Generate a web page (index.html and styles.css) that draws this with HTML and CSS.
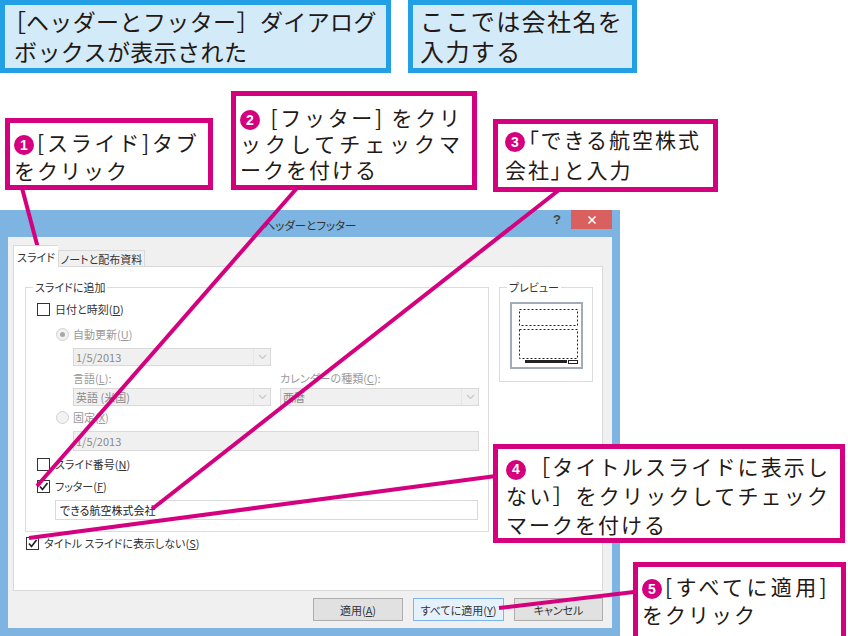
FILE: index.html
```html
<!DOCTYPE html>
<html lang="ja">
<head>
<meta charset="utf-8">
<title>ヘッダーとフッター</title>
<link rel="stylesheet" href="styles.css">
</head>
<body>
<div class="page">
  <div class="notes">
    <div class="note note-a"><span class="half">［</span>ヘッダーとフッター］ダイアログ<br>ボックスが表示された</div>
    <div class="note note-b">ここでは会社名を<br>入力する</div>
  </div>

  <div class="dialog">
    <div class="titlebar">
      <span class="title">ヘッダーとフッター</span>
      <div class="controls">
        <span class="help">?</span>
        <span class="close"><svg width="10" height="10" viewBox="0 0 10 10"><path d="M1.5 1.5L8.5 8.5M8.5 1.5L1.5 8.5" stroke="#fff" stroke-width="1.6"/></svg></span>
      </div>
    </div>
    <div class="client">
      <div class="tabs">
        <span class="tab active">スライド</span>
        <span class="tab">ノートと配布資料</span>
      </div>
      <div class="panel">
        <div class="groups">
          <div class="group main">
            <span class="legend">スライドに追加</span>
            <div class="row"><span class="cb"></span><span class="lbl">日付と時刻(<u>D</u>)</span></div>
            <div class="sub">
              <div class="row r-auto"><span class="rb on"></span><span class="lbl dis">自動更新(<u>U</u>)</span></div>
              <div class="indent">
                <div class="select s-date"><span class="val">1/5/2013</span><span class="arrow"><svg width="9" height="6" viewBox="0 0 9 6"><path d="M1 1L4.5 4.5L8 1" fill="none" stroke="#c8c8c8" stroke-width="1.2"/></svg></span></div>
                <div class="pair-labels"><span class="pl-a">言語(<u>L</u>):</span><span>カレンダーの種類(<u>C</u>):</span></div>
                <div class="pair">
                  <div class="select s-lang"><span class="val">英語 (米国)</span><span class="arrow"><svg width="9" height="6" viewBox="0 0 9 6"><path d="M1 1L4.5 4.5L8 1" fill="none" stroke="#c8c8c8" stroke-width="1.2"/></svg></span></div>
                  <div class="select s-cal"><span class="val">西暦</span><span class="arrow"><svg width="9" height="6" viewBox="0 0 9 6"><path d="M1 1L4.5 4.5L8 1" fill="none" stroke="#c8c8c8" stroke-width="1.2"/></svg></span></div>
                </div>
              </div>
              <div class="row r-fixed"><span class="rb"></span><span class="lbl dis">固定(<u>X</u>)</span></div>
              <div class="indent"><div class="textbox fixed">1/5/2013</div></div>
            </div>
            <div class="row r-num"><span class="cb"></span><span class="lbl">スライド番号(<u>N</u>)</span></div>
            <div class="row r-foot"><span class="cb"><svg width="11" height="11" viewBox="0 0 11 11"><path d="M2 5.5L4.5 8.5L9.5 2" fill="none" stroke="#222" stroke-width="1.7"/></svg></span><span class="lbl">フッター(<u>F</u>)</span></div>
            <div class="textbox footer">できる航空株式会社</div>
          </div>
          <div class="group preview">
            <span class="legend">プレビュー</span>
            <div class="thumb">
              <svg width="69" height="63" viewBox="0 0 69 63">
                <rect x="7.5" y="5.5" width="58" height="16" fill="none" stroke="#222" stroke-width="1" stroke-dasharray="2 2"/>
                <rect x="7.5" y="25.5" width="58" height="29" fill="none" stroke="#222" stroke-width="1" stroke-dasharray="2 2"/>
                <rect x="13" y="56" width="42" height="3" fill="#222"/>
                <rect x="56.5" y="56.5" width="9" height="3" fill="none" stroke="#222" stroke-width="1"/>
              </svg>
            </div>
          </div>
        </div>
        <div class="row r-title"><span class="cb"><svg width="11" height="11" viewBox="0 0 11 11"><path d="M2 5.5L4.5 8.5L9.5 2" fill="none" stroke="#222" stroke-width="1.7"/></svg></span><span class="lbl">タイトル スライドに表示しない(<u>S</u>)</span></div>
      </div>
      <div class="buttons">
        <span class="btn b-apply">適用(<u>A</u>)</span>
        <span class="btn b-all">すべてに適用(<u>Y</u>)</span>
        <span class="btn b-cancel">キャンセル</span>
      </div>
    </div>
  </div>

  <svg class="leaders" width="848" height="636" viewBox="0 0 848 636">
    <g stroke="#d4007e" stroke-width="4" stroke-linecap="butt" fill="none">
      <line x1="22" y1="188" x2="39" y2="252"/>
      <line x1="297" y1="188" x2="37" y2="486"/>
      <line x1="559" y1="190" x2="152" y2="509"/>
      <line x1="496" y1="476" x2="29" y2="538"/>
      <line x1="634" y1="592" x2="499" y2="608"/>
    </g>
  </svg>

  <div class="callout c1">
    <span class="ln wide"><span class="num">1</span>[スライド]タブ</span>
    <span class="ln">をクリック</span>
  </div>
  <div class="callout c2">
    <span class="ln fill"><span class="num">2</span> [フッター] をクリ</span>
    <span class="ln fill">ックしてチェックマ</span>
    <span class="ln">ークを付ける</span>
  </div>
  <div class="callout c3">
    <span class="ln"><span class="num">3</span><span class="half">「</span>できる航空株式</span>
    <span class="ln">会社<span class="half">」</span>と入力</span>
  </div>
  <div class="callout c4">
    <span class="ln fill"><span class="num">4</span>［タイトルスライドに表示し</span>
    <span class="ln fill">ない］をクリックしてチェック</span>
    <span class="ln">マークを付ける</span>
  </div>
  <div class="callout c5">
    <span class="ln wider"><span class="num">5</span>[すべてに適用]</span>
    <span class="ln">をクリック</span>
  </div>
</div>
</body>
</html>
```

FILE: styles.css
```css
* { box-sizing: border-box; margin: 0; padding: 0; }
html, body { background: #fff; }
body { width: 848px; height: 636px; overflow: hidden; }

.page {
  position: relative;
  width: 848px;
  height: 636px;
  overflow: hidden;
  font-family: "Noto Sans CJK JP", "Noto Sans", sans-serif;
  color: #231815;
}

.half { font-feature-settings: "palt"; }

/* top notes */
.notes { display: flex; gap: 17px; }
.note {
  height: 73px;
  border: 5px solid #23a0e5;
  background: #d3eaf8;
  padding: 1px 0 0 9px;
  font-size: 23px;
  line-height: 30px;
  letter-spacing: 0.4px;
  white-space: nowrap;
}
.note-a { width: 391px; }
.note-b { width: 229px; padding-left: 7px; font-size: 24px; letter-spacing: 1.4px; }

/* dialog */
.dialog {
  margin-top: 137px;
  width: 620px;
  height: 426px;
  background: #7db4e1;
  display: flex;
  flex-direction: column;
  font-size: 11px;
  color: #333;
  font-feature-settings: "palt";
}
.titlebar {
  height: 27px;
  display: grid;
  grid-template-columns: 1fr auto 1fr;
}
.title { grid-column: 2; align-self: center; font-size: 11.5px; color: #333; padding-top: 2px; }
.controls {
  justify-self: end;
  display: flex;
  align-items: flex-start;
  padding-right: 8px;
}
.help {
  font-family: "Liberation Sans", sans-serif;
  font-weight: bold;
  font-size: 13px;
  color: #444;
  margin-top: 2px;
  margin-right: 10px;
}
.close {
  width: 41px;
  height: 19px;
  background: #d9605e;
  display: flex;
  align-items: center;
  justify-content: center;
}

.client {
  flex: 1;
  margin: 0 8px 8px;
  background: #f0f0f0;
  padding: 8px 9px 0 5px;
}
.tabs { display: flex; align-items: flex-end; height: 21px; }
.tab {
  height: 16px;
  width: 87px;
  border: 1px solid #d9d9d9;
  border-bottom: none;
  background: #f0f0f0;
  display: flex;
  align-items: center;
  justify-content: center;
  font-size: 11px;
  color: #333;
}
.tab.active {
  width: 45px;
  height: 22px;
  background: #fff;
  margin-bottom: -1px;
  position: relative;
  z-index: 1;
  border-right: none;
}
.panel {
  height: 325px;
  border: 1px solid #d9d9d9;
  background: #fff;
  padding: 20px 0 0 11px;
}
.groups { display: flex; align-items: flex-start; gap: 10px; }
.group {
  position: relative;
  border: 1px solid #dcdcdc;
}
.legend {
  position: absolute;
  top: -9px;
  left: 7px;
  background: #fff;
  padding: 0 2px;
  line-height: 16px;
  color: #333;
}
.group.main {
  width: 464px;
  height: 245px;
  padding: 11px 0 0 11px;
  display: flex;
  flex-direction: column;
}
.group.preview {
  width: 94px;
  height: 95px;
  padding: 14px 0 0 10px;
}
.thumb {
  width: 73px;
  height: 67px;
  border: 2px solid #a3acb6;
  background: #fff;
}
.thumb svg { display: block; }

.row { display: flex; align-items: center; height: 20px; }
.lbl { margin-left: 5px; line-height: 14px; }
.lbl.dis { color: #9a9a9a; margin-left: 4px; }
.cb {
  width: 13px;
  height: 13px;
  border: 1px solid #333;
  background: #fff;
  display: flex;
  align-items: center;
  justify-content: center;
  flex: none;
}
.rb {
  width: 13px;
  height: 13px;
  border-radius: 50%;
  border: 1px solid #d0d0d0;
  background: #f2f2f2;
  flex: none;
  display: flex;
  align-items: center;
  justify-content: center;
}
.rb.on::after {
  content: "";
  width: 5px;
  height: 5px;
  border-radius: 50%;
  background: #a8a8a8;
}
.sub { padding-left: 19px; display: flex; flex-direction: column; }
.r-auto { margin-top: 5px; }
.indent { padding-left: 17px; display: flex; flex-direction: column; }
.select {
  height: 18px;
  border: 1px solid #d9d9d9;
  background: #f0f0f0;
  display: flex;
  align-items: center;
  color: #8a8a8a;
}
.select .val { flex: 1; padding-left: 2px; }
.select .arrow {
  width: 17px;
  height: 100%;
  border-left: 1px solid #e4e4e4;
  display: flex;
  align-items: center;
  justify-content: center;
}
.s-date { width: 198px; margin-top: 4px; }
.pair-labels { display: flex; margin-top: 5px; height: 14px; line-height: 14px; color: #9a9a9a; }
.pl-a { width: 207px; }
.pair { display: flex; gap: 9px; margin-top: 3px; }
.s-lang { width: 198px; }
.s-cal { width: 199px; }
.r-fixed { height: 18px; margin-top: 2px; }
.textbox {
  height: 20px;
  border: 1px solid #d9d9d9;
  display: flex;
  align-items: center;
  padding-left: 2px;
}
.textbox.fixed { width: 406px; margin-top: 5px; background: #f0f0f0; color: #8a8a8a; }
.r-num { margin-top: 3px; }
.r-foot { margin-top: 2px; }
.textbox.footer { width: 423px; margin: 4px 0 0 18px; background: #fff; color: #222; padding-left: 4px; }
.r-title { margin: 2px 0 0 1px; height: 18px; }

.buttons { display: flex; justify-content: flex-end; gap: 10px; padding-top: 7px; }
.btn {
  height: 23px;
  border: 1px solid #adadad;
  background: #e1e1e1;
  display: flex;
  align-items: center;
  justify-content: center;
  color: #333;
}
.b-apply { width: 90px; }
.b-all { width: 91px; border-color: #7eb4ea; background: #e5f1fb; }
.b-cancel { width: 89px; }

/* annotation leaders */
.leaders { position: absolute; left: 0; top: 0; pointer-events: none; }

/* callouts */
.callout {
  position: absolute;
  border: 5px solid #d4007e;
  background: #fff;
  padding: 5px 4px 0 4px;
  font-size: 21px;
  line-height: 28px;
  letter-spacing: 2px;
  white-space: nowrap;
  color: #231815;
}
.ln { display: block; }
.ln.fill { text-align: justify; text-align-last: justify; }
.ln.wide { letter-spacing: 2.8px; }
.ln.wider { letter-spacing: 3.4px; }
.num {
  display: inline-flex;
  align-items: center;
  justify-content: center;
  width: 20px;
  height: 20px;
  border-radius: 50%;
  background: #d4007e;
  color: #fff;
  font-family: "Liberation Sans", sans-serif;
  font-weight: bold;
  font-size: 14px;
  letter-spacing: 0;
  vertical-align: 1px;
  margin-right: 3px;
}
.c1 { left: 5px; top: 118px; width: 208px; height: 72px; }
.c2 { left: 231px; top: 91px; width: 246px; height: 99px; padding-top: 8px; padding-right: 10px; line-height: 26px; }
.c3 { left: 493px; top: 119px; width: 225px; height: 73px; padding-top: 0; padding-left: 7px; line-height: 30px; }
.c4 { left: 493px; top: 444px; width: 352px; height: 99px; padding: 3px 10px 0 8px; line-height: 29px; }
.c5 { left: 633px; top: 562px; width: 213px; height: 80px; }
```
